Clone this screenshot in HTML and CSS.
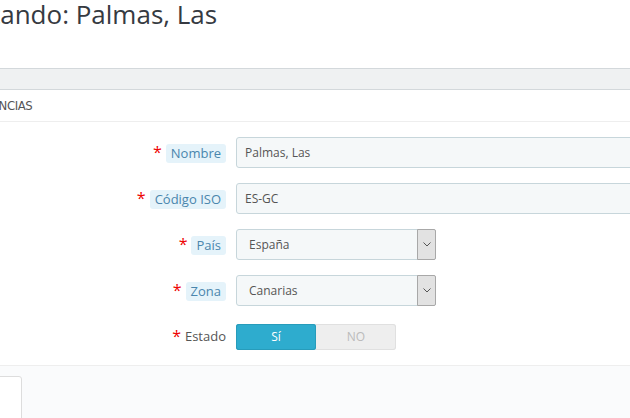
FILE: index.html
```html
<!DOCTYPE html>
<html lang="es">
<head>
<meta charset="utf-8">
<title>Editando: Palmas, Las</title>
<link rel="stylesheet" href="styles.css">
</head>
<body>
<div class="page">
  <h1 class="page-title">Editando: Palmas, Las</h1>
  <div class="toolbar-band"></div>
  <div class="panel">
    <div class="panel-heading">Provincias</div>
    <form class="form">
      <div class="row">
        <div class="label"><span class="req">*</span><span class="tip">Nombre</span></div>
        <div class="control"><div class="input wide">Palmas, Las</div></div>
      </div>
      <div class="row">
        <div class="label"><span class="req">*</span><span class="tip">Código ISO</span></div>
        <div class="control"><div class="input wide">ES-GC</div></div>
      </div>
      <div class="row">
        <div class="label"><span class="req">*</span><span class="tip">País</span></div>
        <div class="control">
          <div class="select"><span class="select-text">España</span><span class="arrow"><svg width="8" height="5" viewBox="0 0 8 5"><path d="M0.5 0.5 L4 4 L7.5 0.5" fill="none" stroke="#555" stroke-width="1"/></svg></span></div>
        </div>
      </div>
      <div class="row">
        <div class="label"><span class="req">*</span><span class="tip">Zona</span></div>
        <div class="control">
          <div class="select"><span class="select-text">Canarias</span><span class="arrow"><svg width="8" height="5" viewBox="0 0 8 5"><path d="M0.5 0.5 L4 4 L7.5 0.5" fill="none" stroke="#555" stroke-width="1"/></svg></span></div>
        </div>
      </div>
      <div class="row">
        <div class="label"><span class="req">*</span><span class="plain">Estado</span></div>
        <div class="control">
          <div class="switch"><span class="on">Sí</span><span class="off">NO</span></div>
        </div>
      </div>
    </form>
    <div class="panel-footer">
      <div class="footer-card"></div>
    </div>
  </div>
</div>
</body>
</html>
```
FILE: styles.css
```css
html, body {
  margin: 0;
  padding: 0;
  background: #fff;
  overflow: hidden;
  width: 630px;
  height: 418px;
}
.page {
  font-family: "Open Sans", "Noto Sans", sans-serif;
  color: #555;
}
.page-title {
  margin: 0 0 40px -46px;
  font-size: 26px;
  line-height: 28px;
  font-weight: 400;
  color: #363a41;
  white-space: nowrap;
}
.toolbar-band {
  height: 20px;
  background: #eff1f2;
  border-top: 1px solid #d3d8db;
  border-bottom: 1px solid #d3d8db;
  margin-right: -20px;
}
.panel {
  margin-left: -140px;
  width: 900px;
}
.panel-heading {
  height: 31px;
  line-height: 31px;
  border-bottom: 1px solid #eee;
  padding-left: 105px;
  font-family: "DejaVu Sans Condensed", "Liberation Sans Narrow", "Open Sans", sans-serif;
  font-size: 13px;
  text-transform: uppercase;
  color: #555;
  letter-spacing: -0.4px;
}
.form {
  display: flex;
  flex-direction: column;
  gap: 15px;
  padding: 15px 0 13px;
  border-bottom: 1px solid #eee;
}
.row {
  display: grid;
  grid-template-columns: 366px 1fr;
  column-gap: 10px;
  height: 31px;
  align-items: center;
}
.label {
  display: flex;
  justify-content: flex-end;
  align-items: center;
  gap: 4px;
  font-size: 13px;
}
.req {
  color: #e00;
  font-size: 16px;
  line-height: 1;
  position: relative;
  top: -1px;
}
.tip {
  background: #e5f3fa;
  color: #4a86ad;
  padding: 0 5px;
  height: 19px;
  line-height: 19px;
  border-radius: 3px;
  margin-top: 2px;
}
.plain {
  color: #555;
  line-height: 19px;
}
.control {
  display: flex;
  align-items: center;
}
.input {
  box-sizing: border-box;
  height: 31px;
  line-height: 29px;
  padding: 0 8px;
  background: #f5f8f9;
  border: 1px solid #c7d6db;
  border-radius: 3px;
  font-size: 12px;
  color: #555;
}
.input.wide {
  width: 600px;
}
.select {
  box-sizing: border-box;
  width: 200px;
  height: 31px;
  display: flex;
  background: #f5f8f9;
  border: 1px solid #c7d6db;
  border-radius: 3px;
  font-size: 12px;
  color: #555;
}
.select-text {
  flex: 1;
  line-height: 29px;
  padding-left: 12px;
}
.arrow {
  width: 17px;
  display: flex;
  align-items: center;
  justify-content: center;
  background: #e2e2e2;
  border: 1px solid #a8a8a8;
  border-radius: 0 2px 2px 0;
  margin: -1px -1px -1px 0;
}
.switch {
  display: flex;
  width: 160px;
  height: 26px;
  border-radius: 3px;
  background: #eee;
  box-shadow: inset 0 0 0 1px #e0e0e0;
  font-size: 12px;
}
.switch .on {
  width: 80px;
  background: #2eacce;
  color: #fff;
  border-radius: 3px;
  text-align: center;
  line-height: 26px;
  box-shadow: inset 0 0 0 1px #279cbb;
}
.switch .off {
  width: 80px;
  color: #bbb;
  text-align: center;
  line-height: 26px;
}
.panel-footer {
  background: #fafbfc;
  padding: 10px 0 0 0;
  height: 60px;
}
.footer-card {
  margin-left: 100px;
  width: 60px;
  height: 60px;
  background: #fff;
  border: 1px solid #ddd;
  border-radius: 3px;
}
```
